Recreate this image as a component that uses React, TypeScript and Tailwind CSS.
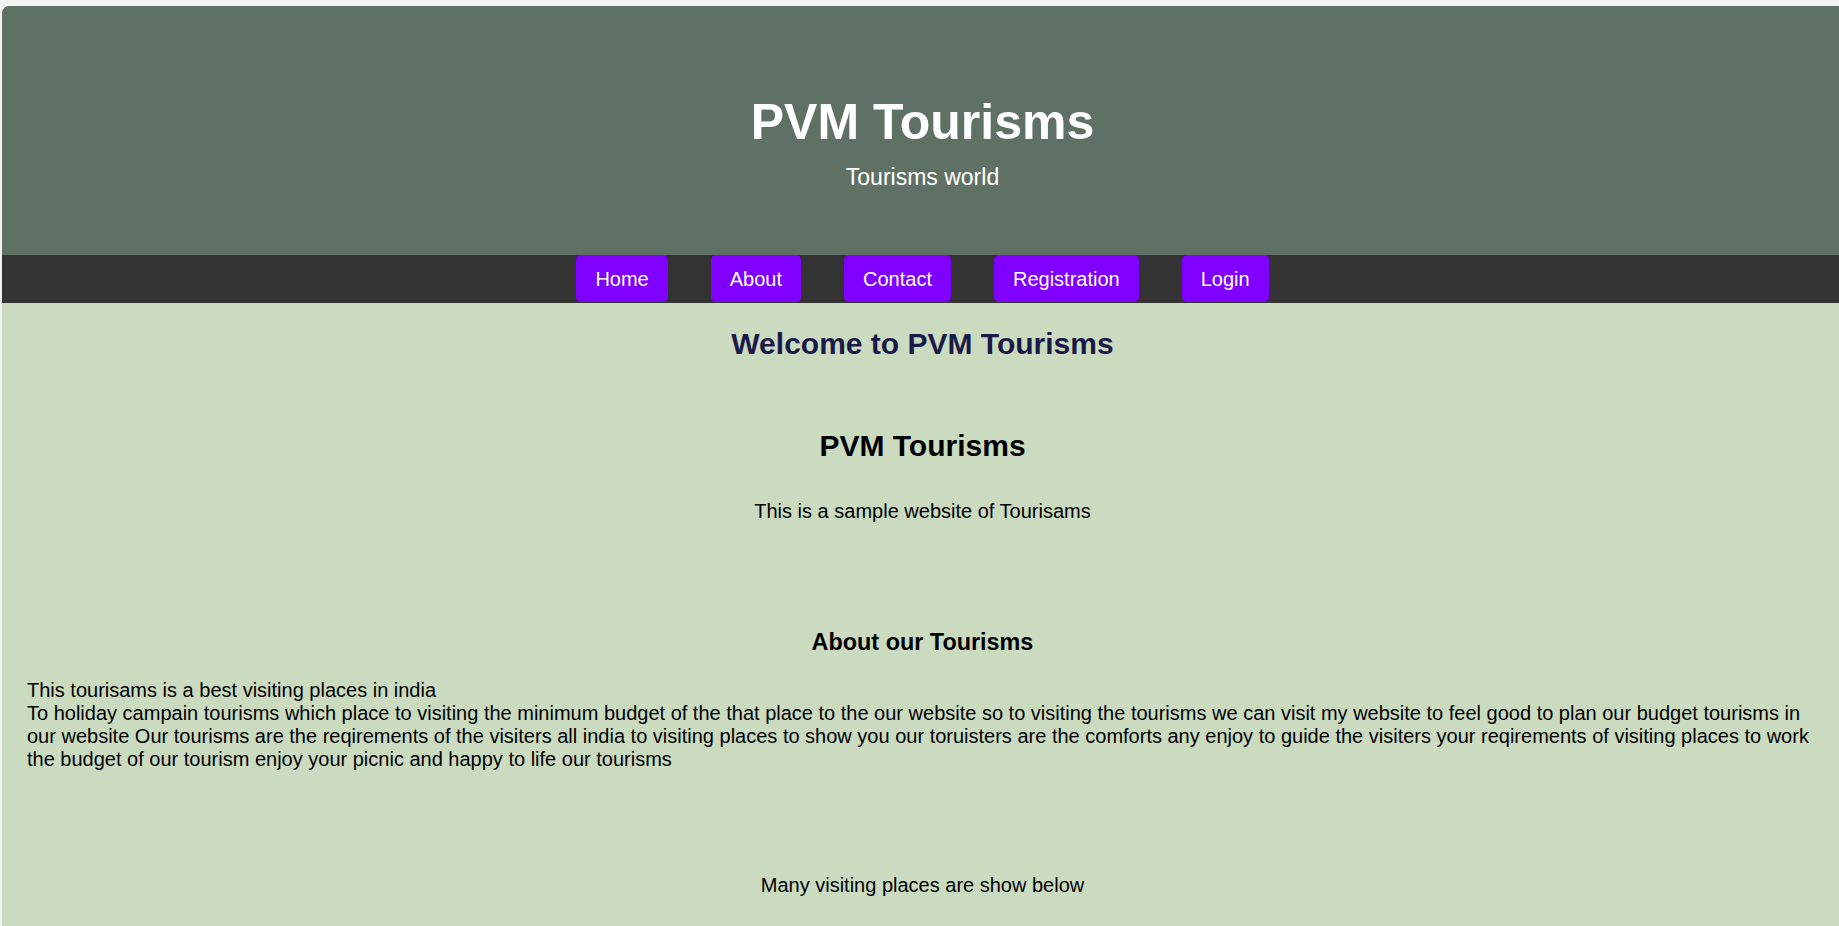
const links = ["Home", "About", "Contact", "Registration", "Login"];

export default function App() {
  return (
    <div className="min-h-screen bg-[#f3f3f3] pt-[6px] pl-[2px] font-['Liberation_Sans',Arial,sans-serif]">
      <div className="rounded-tl-[7px] overflow-hidden bg-[#cadbbf] min-h-[920px]">
        <header className="bg-[#5f7065] text-white text-center pl-[4px] pt-[88px] h-[249px]">
          <h1 className="text-[50px] font-bold leading-[57px]">PVM Tourisms</h1>
          <p className="text-[23px] leading-[26px] mt-[13px]">Tourisms world</p>
        </header>

        <nav className="bg-[#333333] h-[48px] pl-[4px] flex justify-center gap-[43px]">
          {links.map((l) => (
            <a
              key={l}
              href="#"
              className="bg-[#8000ff] text-white text-[20px] h-[47px] px-[19px] rounded-[5px] flex items-center"
            >
              {l}
            </a>
          ))}
        </nav>

        <main className="text-center text-black pl-[4px]">
          <h2 className="pt-[24px] text-[30px] leading-[34px] font-bold text-[#1a1a48]">
            Welcome to PVM Tourisms
          </h2>
          <h2 className="mt-[68px] text-[30px] leading-[34px] font-bold">PVM Tourisms</h2>
          <p className="mt-[37px] text-[20px] leading-[23px]">This is a sample website of Tourisams</p>

          <h3 className="mt-[106px] text-[23.4px] leading-[27px] font-bold">About our Tourisms</h3>
          <p className="mt-[23px] pl-[21px] pr-[25px] text-left text-[20px] leading-[23px]">
            This tourisams is a best visiting places in india
            <br />
            To holiday campain tourisms which place to visiting the minimum budget of the that place to
            the our website so to visiting the tourisms we can visit my website to feel good to plan our
            budget tourisms in our website Our tourisms are the reqirements of the visiters all india to
            visiting places to show you our toruisters are the comforts any enjoy to guide the visiters
            your reqirements of visiting places to work the budget of our tourism enjoy your picnic and
            happy to life our tourisms
          </p>

          <p className="mt-[103px] text-[20px] leading-[23px]">Many visiting places are show below</p>
        </main>
      </div>
    </div>
  );
}
